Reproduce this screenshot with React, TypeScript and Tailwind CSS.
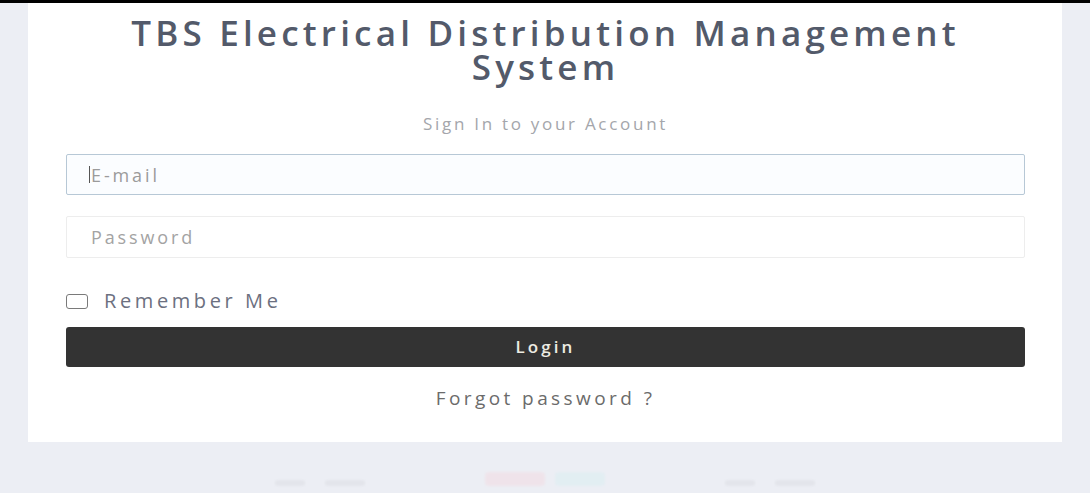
import React, { useState } from "react";

const App = () => {
  const [email, setEmail] = useState("");
  const [password, setPassword] = useState("");
  const [remember, setRemember] = useState(false);

  return (
    <div className="min-h-[493px] bg-[#eceef4] font-['Open_Sans','Noto_Sans',sans-serif]">
      <div className="h-[3px] bg-black" />

      <div className="px-[28px]">
        <div className="bg-white pl-[38px] pr-[37px] pt-[13px] pb-[33px]">
          <h1 className="text-center text-[35px] leading-[34px] font-semibold tracking-[0.12em] text-[#535a6a]">
            TBS Electrical Distribution Management System
          </h1>
          <p className="mt-[29px] text-center text-[17px] leading-[22px] tracking-[0.16em] text-[#a4a6ab]">
            Sign In to your Account
          </p>

          <form className="mt-[19px]" onSubmit={(e) => e.preventDefault()}>
            <div className="relative">
              <input
                type="email"
                value={email}
                onChange={(e) => setEmail(e.target.value)}
                placeholder="E-mail"
                className="block h-[41px] w-full rounded-[2px] border border-[#b7c8d6] bg-[#fbfdff] px-[24px] text-[18px] tracking-[0.16em] text-[#444] placeholder:text-[#9b9b9b] outline-none"
              />
              {!email && <span className="absolute left-[23px] top-[12px] h-[17px] w-px bg-[#555]" />}
            </div>
            <input
              type="password"
              value={password}
              onChange={(e) => setPassword(e.target.value)}
              placeholder="Password"
              className="mt-[21px] block h-[42px] w-full rounded-[2px] border border-[#ededed] bg-white px-[24px] text-[18px] tracking-[0.16em] text-[#444] placeholder:text-[#a3a3a3] outline-none"
            />

            <label className="mt-[32px] flex items-center gap-[16px] cursor-pointer">
              <input
                type="checkbox"
                checked={remember}
                onChange={(e) => setRemember(e.target.checked)}
                className="sr-only"
              />
              <span className="h-[15px] w-[22px] rounded-[3px] border border-[#7a7a7a] bg-white" />
              <span className="text-[20px] leading-[22px] tracking-[0.18em] text-[#6c7080]">Remember Me</span>
            </label>

            <button
              type="submit"
              className="mt-[15px] block h-[40px] w-full rounded-[3px] bg-[#333333] text-[17px] font-semibold tracking-[0.18em] text-[#ecebe2]"
            >
              Login
            </button>
          </form>

          <p className="mt-[20px] text-center text-[19px] leading-[22px] tracking-[0.18em] text-[#6b6b6b]">
            Forgot password ?
          </p>
        </div>
      </div>

      {/* faint partner strip below the card */}
      <div className="mt-[30px] flex items-end justify-center gap-[120px] opacity-40 blur-[1px]">
        <div className="flex gap-[20px]">
          <div className="h-[6px] w-[30px] rounded bg-[#d6d8de]" />
          <div className="h-[6px] w-[40px] rounded bg-[#d6d8de]" />
        </div>
        <div className="flex gap-[10px]">
          <div className="h-[14px] w-[60px] rounded bg-[#f4d5dc]" />
          <div className="h-[14px] w-[50px] rounded bg-[#d5eef0]" />
        </div>
        <div className="flex gap-[20px]">
          <div className="h-[6px] w-[30px] rounded bg-[#d6d8de]" />
          <div className="h-[6px] w-[40px] rounded bg-[#d6d8de]" />
        </div>
      </div>
    </div>
  );
};

export default App;
